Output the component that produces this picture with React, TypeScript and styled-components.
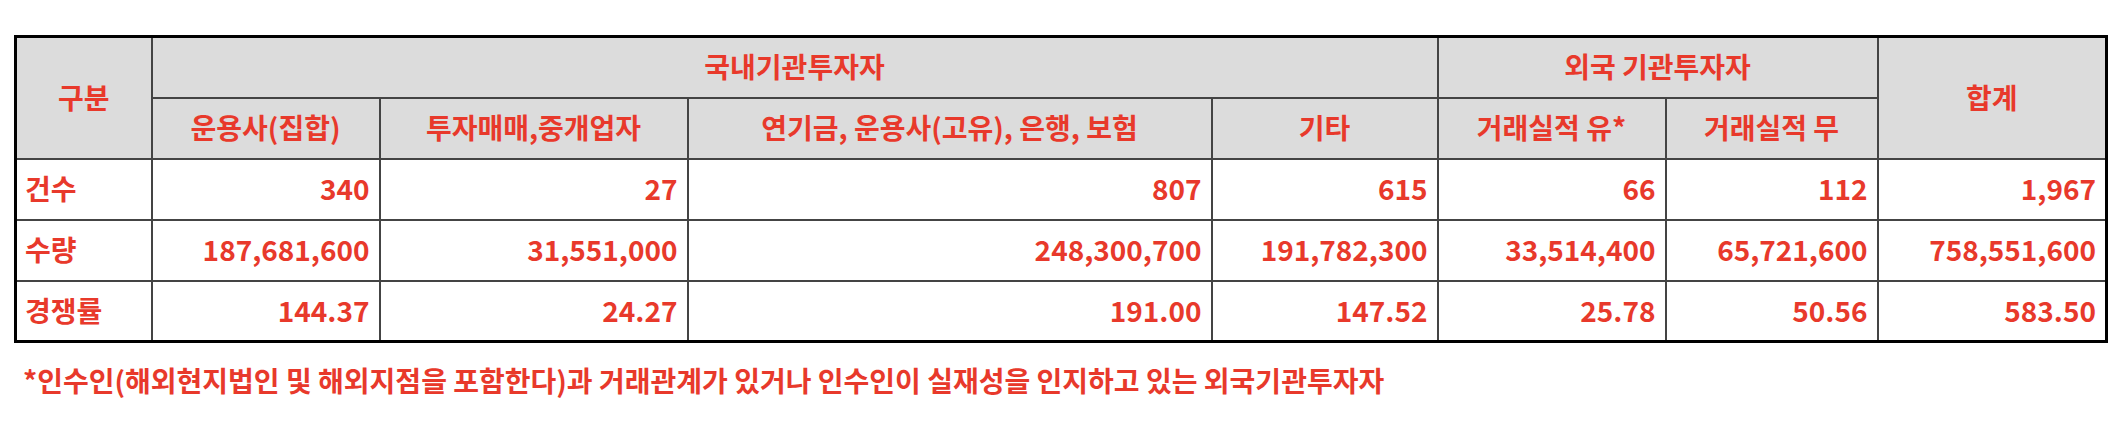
import React from 'react';
import styled, { createGlobalStyle } from 'styled-components';

const RED = '#e8392b';

const GlobalStyle = createGlobalStyle`
  html, body {
    margin: 0;
    padding: 0;
    background: #fff;
  }
  body {
    font-family: 'Noto Sans CJK KR', 'Noto Sans', sans-serif;
  }
`;

const Page = styled.div`
  padding: 35px 0 0 14px;
`;

const Table = styled.table`
  border-collapse: collapse;
  table-layout: fixed;
  width: 2091px;
  border: 3px solid #000;
  color: ${RED};
  font-size: 28px;
  font-weight: 700;
  line-height: 1.2;
`;

const Row = styled.tr`
  height: 61px;
`;

const HeadCell = styled.th`
  background: #dcdcdc;
  border: 2px solid #444;
  padding: 0 8px;
  text-align: center;
  vertical-align: middle;
  font-weight: 700;
`;

const LabelCell = styled.td`
  border: 2px solid #444;
  padding: 0 8px;
  text-align: left;
  vertical-align: middle;
`;

const NumCell = styled.td`
  border: 2px solid #444;
  padding: 0 9px;
  text-align: right;
  vertical-align: middle;
`;

const Note = styled.p`
  margin: 17px 0 0 9px;
  color: ${RED};
  font-size: 28px;
  font-weight: 700;
  line-height: 40px;
`;

const widths = [136, 228, 308, 524, 226, 228, 212, 229];

const rows = [
  { label: '건수', values: ['340', '27', '807', '615', '66', '112', '1,967'] },
  {
    label: '수량',
    values: [
      '187,681,600',
      '31,551,000',
      '248,300,700',
      '191,782,300',
      '33,514,400',
      '65,721,600',
      '758,551,600',
    ],
  },
  { label: '경쟁률', values: ['144.37', '24.27', '191.00', '147.52', '25.78', '50.56', '583.50'] },
];

const App: React.FC = () => {
  return (
    <>
      <GlobalStyle />
      <Page>
        <Table>
          <colgroup>
            {widths.map((w, i) => (
              <col key={i} style={{ width: w }} />
            ))}
          </colgroup>
          <thead>
            <Row>
              <HeadCell rowSpan={2}>구분</HeadCell>
              <HeadCell colSpan={4}>국내기관투자자</HeadCell>
              <HeadCell colSpan={2}>외국 기관투자자</HeadCell>
              <HeadCell rowSpan={2}>합계</HeadCell>
            </Row>
            <Row>
              <HeadCell>운용사(집합)</HeadCell>
              <HeadCell>투자매매,중개업자</HeadCell>
              <HeadCell>연기금, 운용사(고유), 은행, 보험</HeadCell>
              <HeadCell>기타</HeadCell>
              <HeadCell>거래실적 유*</HeadCell>
              <HeadCell>거래실적 무</HeadCell>
            </Row>
          </thead>
          <tbody>
            {rows.map((row) => (
              <Row key={row.label}>
                <LabelCell>{row.label}</LabelCell>
                {row.values.map((v, i) => (
                  <NumCell key={i}>{v}</NumCell>
                ))}
              </Row>
            ))}
          </tbody>
        </Table>
        <Note>
          *인수인(해외현지법인 및 해외지점을 포함한다)과 거래관계가 있거나 인수인이 실재성을 인지하고 있는 외국기관투자자
        </Note>
      </Page>
    </>
  );
};

export default App;
